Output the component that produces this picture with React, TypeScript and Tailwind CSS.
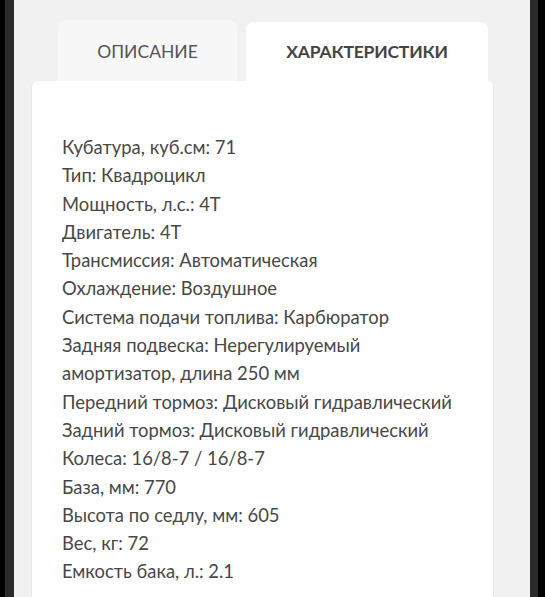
const specs = [
  'Кубатура, куб.см: 71',
  'Тип: Квадроцикл',
  'Мощность, л.с.: 4T',
  'Двигатель: 4T',
  'Трансмиссия: Автоматическая',
  'Охлаждение: Воздушное',
  'Система подачи топлива: Карбюратор',
  'Задняя подвеска: Нерегулируемый амортизатор, длина 250 мм',
  'Передний тормоз: Дисковый гидравлический',
  'Задний тормоз: Дисковый гидравлический',
  'Колеса: 16/8-7 / 16/8-7',
  'База, мм: 770',
  'Высота по седлу, мм: 605',
  'Вес, кг: 72',
  'Емкость бака, л.: 2.1',
];

export default function App() {
  return (
    <div className="h-[597px] w-full bg-black pl-[5px] pr-[7px] overflow-hidden">
      <div className="h-full bg-[#f1f1f1] border-l-[9px] border-r-[8px] border-[#2a2a2a] pt-[20px] font-['Lato','Noto_Sans',sans-serif] text-[#474747]">
        {/* Tabs */}
        <div className="flex items-end gap-[9px] pl-[44px]">
          <div className="w-[179px] h-[61px] rounded-t-lg bg-[#f7f7f7] flex items-center justify-center pt-[4px]">
            <span className="text-[17.5px] tracking-[0px] text-[#555]">ОПИСАНИЕ</span>
          </div>
          <div className="w-[242px] h-[59px] rounded-t-lg bg-white flex items-center justify-center pt-[2px]">
            <span className="text-[17.5px] font-bold tracking-[-0.2px] text-[#444]">ХАРАКТЕРИСТИКИ</span>
          </div>
        </div>

        {/* Card */}
        <div className="ml-[17px] w-[463px] h-[600px] bg-white rounded-t-md border-x border-[#e9e9e9] pl-[30px] pr-[30px] pt-[52px]">
          <ul className="flex flex-col text-[18.4px] leading-[28.3px]">
            {specs.map((s) => (
              <li key={s}>{s}</li>
            ))}
          </ul>
        </div>
      </div>
    </div>
  );
}
